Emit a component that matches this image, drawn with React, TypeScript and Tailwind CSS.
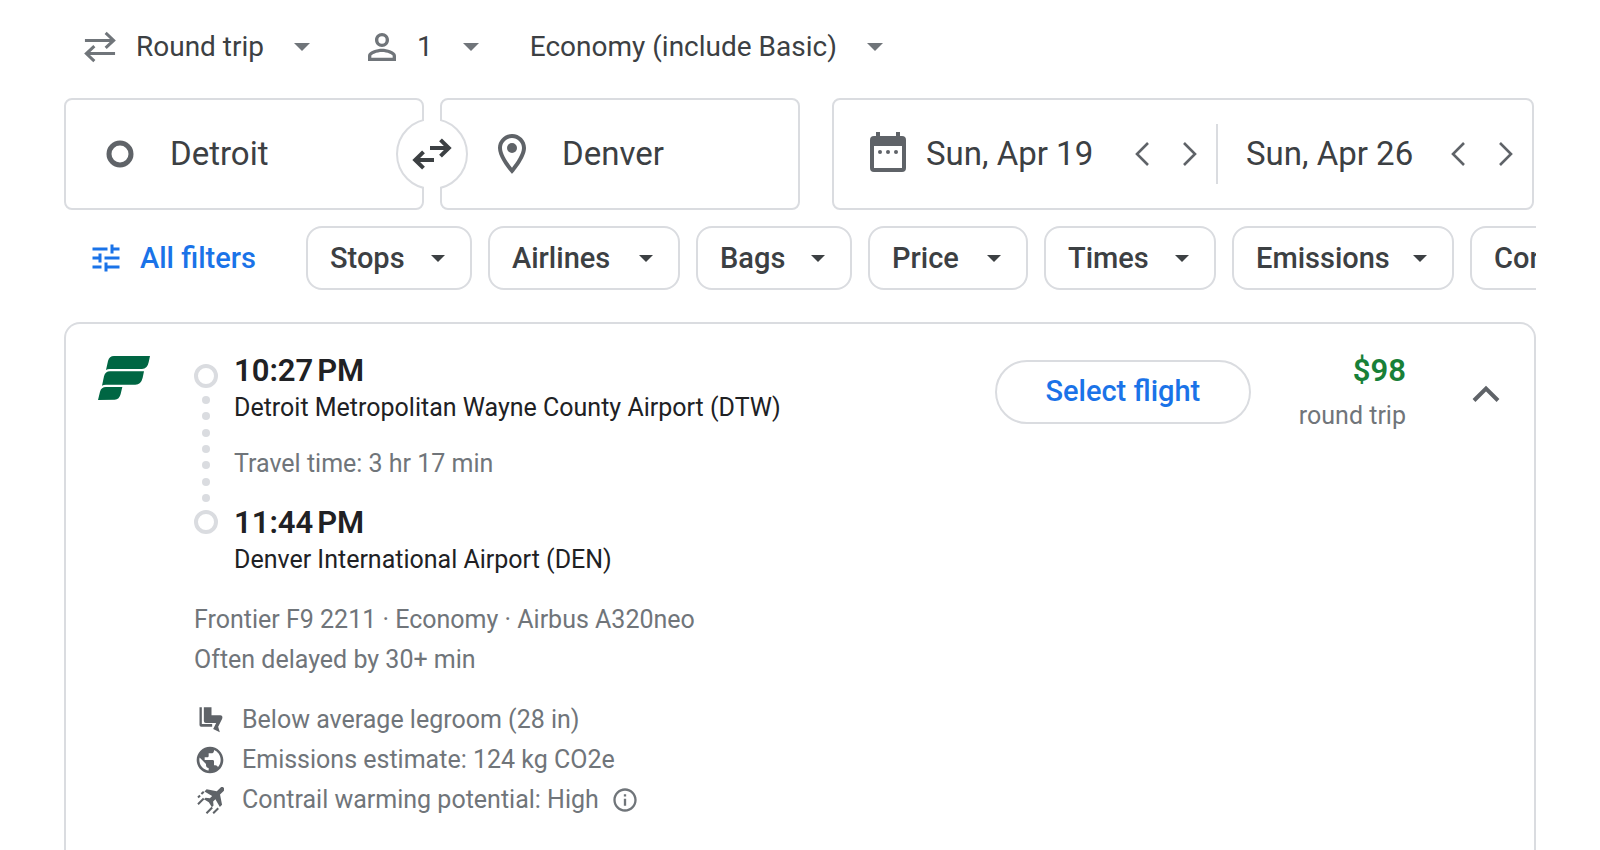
import { useState } from "react";
import { MdPublic, MdTune, MdPersonOutline, MdOutlineInfo } from "react-icons/md";

const filters = [
  { label: "Stops", width: "w-[166px]" },
  { label: "Airlines", width: "w-[192px]" },
  { label: "Bags", width: "w-[156px]" },
  { label: "Price", width: "w-[160px]" },
  { label: "Times", width: "w-[172px]" },
  { label: "Emissions", width: "w-[222px]" },
  { label: "Connecting airports", width: "w-[344px]" },
];

function Caret({ className }: { className: string }) {
  return (
    <svg viewBox="0 0 16 8" className={className} fill="currentColor" aria-hidden="true">
      <path d="M0 0h16L8 8z" />
    </svg>
  );
}

function TripSelect({ label, options }: { label: string; options: string[] }) {
  return (
    <div className="relative">
      <select
        aria-label={label}
        className="block appearance-none field-sizing-content bg-transparent pr-[46px] text-[28px] leading-10 text-[#3c4043] outline-none cursor-pointer"
      >
        {options.map((o) => (
          <option key={o}>{o}</option>
        ))}
      </select>
      <Caret className="pointer-events-none absolute right-0 top-4 h-2 w-4 text-[#70757a]" />
    </div>
  );
}

function DateField({ label, value }: { label: string; value: string }) {
  const [date, setDate] = useState(value);
  return (
    <>
      <input
        aria-label={label}
        value={date}
        onChange={(e) => setDate(e.target.value)}
        className="min-w-0 flex-1 bg-transparent text-[33px] leading-10 text-[#3c4043] outline-none"
      />
      <button aria-label={`${label}: previous day`} className="flex h-12 w-12 shrink-0 items-center justify-center text-[#5f6368]">
        <svg viewBox="0 0 14 24" className="h-6 w-[14px]" fill="none" stroke="currentColor" strokeWidth="2.6">
          <path d="M13 1L2 12l11 11" />
        </svg>
      </button>
      <button aria-label={`${label}: next day`} className="flex h-12 w-12 shrink-0 items-center justify-center text-[#5f6368]">
        <svg viewBox="0 0 14 24" className="h-6 w-[14px]" fill="none" stroke="currentColor" strokeWidth="2.6">
          <path d="M1 1l11 11L1 23" />
        </svg>
      </button>
    </>
  );
}

function Stop({ time, airport }: { time: string; airport: string }) {
  return (
    <div className="text-[#202124]">
      <div className="text-[31px] leading-[42px] font-semibold">{time}</div>
      <div className="text-[25px] leading-8">{airport}</div>
    </div>
  );
}

function LegroomIcon() {
  return (
    <svg viewBox="50 350 80 84" className="h-7 w-[27px]" fill="currentColor" aria-hidden="true">
      <path d="M57 354h7v50h31v8H62q-5 0-5-5z" />
      <path d="M70 354h23v24h26q9 1 6 10l-12 24 5 17-20-10 9-18H76q-6 0-6-6z" />
    </svg>
  );
}

function ContrailIcon() {
  return (
    <svg viewBox="50 590 80 80" className="h-[27px] w-[27px]" aria-hidden="true">
      <path
        d="M9.500 4.200v-2.700l-7.500-5v-4.500a2 2 0 0 0-4 0V-3.500l-7.500 5v2.700l7.500-2V5l-3 2.300v2l4.800-1.200 5 1.200v-2L2 5V2.200z"
        transform="translate(105 616) rotate(45) scale(3.4)"
        fill="currentColor"
      />
      <path
        d="M53 621l6-6M63 611l7-7M53 641l17-17M78 668l17-17M98 668l15-15"
        fill="none"
        stroke="currentColor"
        strokeWidth="6"
      />
    </svg>
  );
}

export default function App() {
  const [from, setFrom] = useState("Detroit");
  const [to, setTo] = useState("Denver");

  const swap = () => {
    setFrom(to);
    setTo(from);
  };

  return (
    <main className="flex min-h-screen flex-col bg-white px-16 font-[Roboto,sans-serif]">
      {/* Trip options */}
      <div className="flex h-[98px] items-center gap-[51px] pb-1 pl-5">
        <div className="flex items-center gap-5">
          <svg viewBox="0 0 34 32" className="h-8 w-8 text-[#70757a]" fill="none" stroke="currentColor" strokeWidth="3.2" aria-hidden="true">
            <path d="M1 9h30M23 1l8.5 8L23 17M33 23H3M11 15l-8.5 8L11 31" />
          </svg>
          <TripSelect label="Ticket type" options={["Round trip", "One way", "Multi-city"]} />
        </div>
        <div className="flex items-center gap-[14px]">
          <MdPersonOutline className="h-[42px] w-[42px] text-[#70757a]" />
          <TripSelect label="Passengers" options={["1", "2", "3", "4"]} />
        </div>
        <TripSelect label="Seating class" options={["Economy (include Basic)", "Premium economy", "Business", "First"]} />
      </div>

      {/* Search fields */}
      <div className="grid grid-cols-[minmax(0,736fr)_minmax(0,702fr)] gap-8 pr-[2px]">
        <div className="relative grid grid-cols-2 gap-4">
          <label className="flex h-28 items-center gap-[26px] rounded-lg border-2 border-[#dadce0] pl-[30px] pr-12">
            <svg viewBox="0 0 48 48" className="h-12 w-12 shrink-0 text-[#5f6368]" fill="none" stroke="currentColor" strokeWidth="5" aria-hidden="true">
              <circle cx="24" cy="24" r="11" />
            </svg>
            <input
              aria-label="Where from?"
              value={from}
              onChange={(e) => setFrom(e.target.value)}
              className="w-full min-w-0 bg-transparent text-[33px] leading-10 text-[#3c4043] outline-none"
            />
          </label>
          <label className="flex h-28 items-center gap-[26px] rounded-lg border-2 border-[#dadce0] pl-[46px] pr-6">
            <svg viewBox="0 0 24 24" className="h-12 w-12 shrink-0 text-[#5f6368]" fill="currentColor" aria-hidden="true">
              <path d="M12 2C8.13 2 5 5.13 5 9c0 5.25 7 13 7 13s7-7.75 7-13c0-3.87-3.13-7-7-7zM7 9c0-2.76 2.24-5 5-5s5 2.24 5 5c0 2.88-2.88 7.19-5 9.88C9.92 16.21 7 11.85 7 9z" />
              <circle cx="12" cy="9" r="2.5" />
            </svg>
            <input
              aria-label="Where to?"
              value={to}
              onChange={(e) => setTo(e.target.value)}
              className="w-full min-w-0 bg-transparent text-[33px] leading-10 text-[#3c4043] outline-none"
            />
          </label>
          {/* the strip behind the arrows opens the ring between the two fields */}
          <button
            aria-label="Swap origin and destination"
            onClick={swap}
            className="absolute left-1/2 top-1/2 flex h-[72px] w-[72px] -translate-x-1/2 -translate-y-1/2 items-center justify-center rounded-full border-2 border-[#dadce0] bg-white text-[#3c4043] before:absolute before:-inset-y-1 before:left-[26px] before:w-4 before:bg-white"
          >
            <svg viewBox="0 0 40 32" className="relative h-8 w-10" fill="none" stroke="currentColor" strokeWidth="4">
              <path d="M18 10h18M28.5 1.8l8.3 8.2-8.3 8.2M22 22H4M11.5 13.8L3.2 22l8.3 8.2" />
            </svg>
          </button>
        </div>

        <div className="flex h-28 items-center rounded-lg border-2 border-[#dadce0]">
          <div className="flex h-[60px] min-w-0 flex-[344] items-center border-r-2 border-[#dadce0] pl-9 pr-[2px]">
            <svg viewBox="0 0 36 44" className="mr-5 h-11 w-9 shrink-0 text-[#5f6368]" fill="currentColor" aria-hidden="true">
              <path fillRule="evenodd" d="M6 0h4v4h16V0h4v4h2q4 0 4 4v28q0 4-4 4H4q-4 0-4-4V8q0-4 4-4h2zM4 14v22h28V14z" />
              <circle cx="10" cy="20" r="2" />
              <circle cx="18" cy="20" r="2" />
              <circle cx="26" cy="20" r="2" />
            </svg>
            <DateField label="Departure" value="Sun, Apr 19" />
          </div>
          <div className="flex h-[60px] min-w-0 flex-[284] items-center pl-7 pr-[2px]">
            <DateField label="Return" value="Sun, Apr 26" />
          </div>
        </div>
      </div>

      {/* Filters */}
      <div className="mt-4 flex">
        <button className="flex h-16 w-[242px] shrink-0 items-center gap-4 pl-6 text-[29px] font-medium text-[#1a73e8]">
          <MdTune className="h-9 w-9" />
          <span className="pt-[2px]">All filters</span>
        </button>
        <div className="flex min-w-0 flex-1 gap-4 overflow-hidden">
          {filters.map((f) => (
            <button
              key={f.label}
              className={`flex h-16 shrink-0 items-center justify-between whitespace-nowrap rounded-2xl border-2 border-[#dadce0] pl-[22px] pr-[25px] text-[29px] font-medium text-[#3c4043] ${f.width}`}
            >
              <span className="pt-[2px]">{f.label}</span>
              <Caret className="h-[7px] w-[14px]" />
            </button>
          ))}
        </div>
      </div>

      {/* Flight card */}
      <section className="mt-8 flex flex-1 items-start rounded-t-2xl border-2 border-b-0 border-[#dadce0] pl-8 pt-[26px]">
        <svg viewBox="114 138 156 132" className="mt-[6px] h-11 w-[52px] shrink-0 text-[#006643]" fill="currentColor" role="img" aria-label="Frontier">
          <path d="M138 180l6-27q4-15 18-15h108l-4 19q-4 20-20 20h-96q-8 0-12 3z" />
          <path d="M126 227l6-28q4-15 18-15h102l-4 19q-5 21-22 21h-88q-8 0-12 3z" />
          <path d="M114 270l6-25q4-14 18-14h49l-5 21q-4 17-18 17z" />
        </svg>

        <div className="ml-11 min-w-0 flex-1 text-[25px] leading-8 text-[#70757a]">
          <div className="flex gap-4">
            <div className="mt-[14px] flex h-[170px] w-6 flex-col items-center">
              <div className="h-6 w-6 shrink-0 rounded-full border-4 border-[#dadce0]" />
              <div className="flex flex-1 flex-col justify-between py-2">
                {[0, 1, 2, 3, 4, 5, 6].map((i) => (
                  <div key={i} className="h-2 w-2 rounded-full bg-[#dadce0]" />
                ))}
              </div>
              <div className="h-6 w-6 shrink-0 rounded-full border-4 border-[#dadce0]" />
            </div>
            <div>
              <Stop time={"10:27\u202fPM"} airport="Detroit Metropolitan Wayne County Airport (DTW)" />
              <div className="mb-[22px] mt-6">Travel time: 3 hr 17 min</div>
              <Stop time={"11:44\u202fPM"} airport="Denver International Airport (DEN)" />
            </div>
          </div>

          <div className="mt-7">Frontier F9 2211 · Economy · Airbus A320neo</div>
          <div className="mt-2">Often delayed by 30+ min</div>

          <ul className="mt-6">
            <li className="flex h-10 items-center gap-4">
              <span className="flex w-8 justify-center text-[#5f6368]">
                <LegroomIcon />
              </span>
              Below average legroom (28 in)
            </li>
            <li className="flex h-10 items-center gap-4">
              <span className="flex w-8 justify-center text-[#5f6368]">
                <MdPublic className="h-8 w-8" />
              </span>
              Emissions estimate: 124 kg CO2e
            </li>
            <li className="flex h-10 items-center gap-4">
              <span className="flex w-8 justify-center text-[#5f6368]">
                <ContrailIcon />
              </span>
              <span className="flex items-center gap-3">
                Contrail warming potential: High
                <button aria-label="About contrails">
                  <MdOutlineInfo className="h-7 w-7" />
                </button>
              </span>
            </li>
          </ul>
        </div>

        <button className="mt-[10px] h-16 w-64 shrink-0 rounded-full border-2 border-[#dadce0] text-[29px] font-medium text-[#1a73e8]">
          Select flight
        </button>
        <div className="ml-12 shrink-0 text-right">
          <div className="text-[31px] leading-[42px] font-semibold text-[#188038]">$98</div>
          <div className="mt-2 text-[25px] leading-8 text-[#70757a]">round trip</div>
        </div>
        <button aria-label="Hide flight details" className="ml-14 mr-6 mt-5 flex h-12 w-12 shrink-0 items-center justify-center text-[#5f6368]">
          <svg viewBox="0 0 28 18" className="h-[18px] w-7" fill="none" stroke="currentColor" strokeWidth="4">
            <path d="M2 15.5L14 3.500l12 12" />
          </svg>
        </button>
      </section>
    </main>
  );
}
